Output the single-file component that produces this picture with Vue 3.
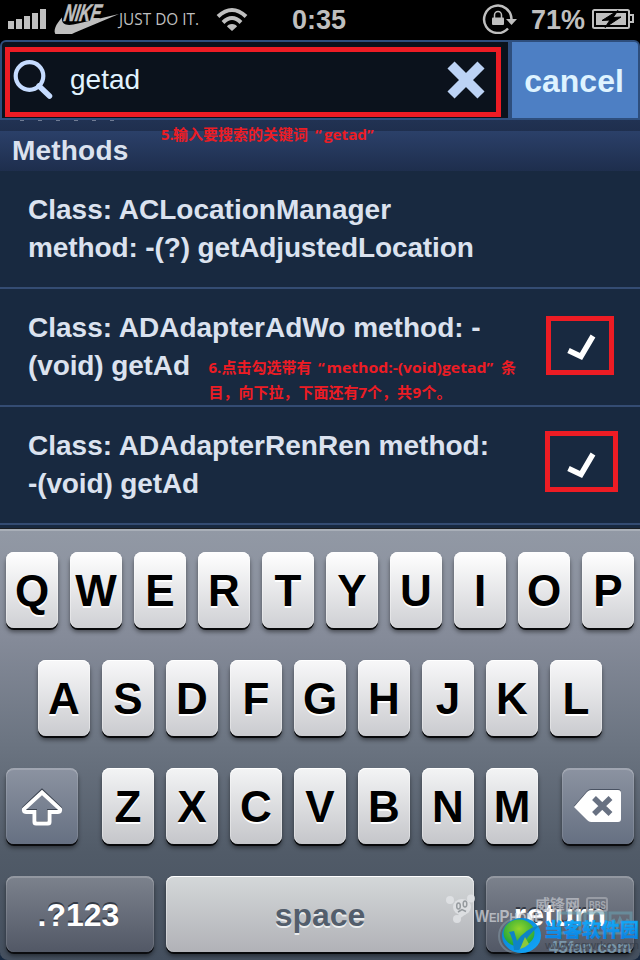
<template>
  <div class="phone">
    <header class="status">
      <svg class="carrier" width="260" height="40" viewBox="0 0 260 40">
        <g fill="#bfbfbf">
          <rect x="8" y="21" width="6" height="8" />
          <rect x="16" y="19" width="6" height="10" />
          <rect x="24" y="16" width="6" height="13" />
          <rect x="32" y="13" width="6" height="16" />
          <rect x="40" y="9" width="6" height="20" />
          <path d="M62 17.500 C56 24 52.500 31 56 35 C60 39 68 36 75 32.500 L119 14 L78 23.500 C69 26 61 26 62 17.500Z" />
        </g>
        <text class="nike" transform="translate(63 21) skewX(-10)" x="0" y="0" textLength="37" lengthAdjust="spacingAndGlyphs">NIKE</text>
        <text class="slogan" x="119" y="25" textLength="80" lengthAdjust="spacingAndGlyphs">JUST DO IT.</text>
        <g fill="none" stroke="#bfbfbf" stroke-width="4">
          <path d="M218 16.500 Q232 3.500 246 16.500" />
          <path d="M223 22.500 Q232 13.500 241 22.500" />
        </g>
        <path d="M227 26.500 Q228 24 232 24 Q236 24 237 26.500 L232 31Z" fill="#bfbfbf" />
      </svg>
      <span class="time">0:35</span>
      <svg class="lock" width="36" height="36" viewBox="0 0 36 36">
        <path d="M26 27.500 A13.700 13.700 0 1 1 29.500 18.500" fill="none" stroke="#bfbfbf" stroke-width="2.500" />
        <path d="M24 18 H35 L29.500 24Z" fill="#bfbfbf" />
        <rect x="10" y="16.500" width="12" height="7.500" rx="1" fill="#bfbfbf" />
        <path d="M12.500 17 V14 A3.500 3.500 0 0 1 19.500 14 V17" fill="none" stroke="#bfbfbf" stroke-width="1.500" />
      </svg>
      <span class="percent">71%</span>
      <svg class="battery" width="42" height="20" viewBox="0 0 42 20">
        <rect x="1" y="1" width="36" height="18" rx="1.500" fill="none" stroke="#bfbfbf" stroke-width="2" />
        <rect x="4" y="4" width="30" height="12" fill="#bfbfbf" />
        <path d="M38 6 H41 V13 H38" fill="none" stroke="#bfbfbf" stroke-width="2" />
        <path d="M26 1.500 L10 11.500 L18 11 L13 18.500 L29 8 L21 8.500Z" fill="#000" stroke="#000" />
        <path d="M24 3.500 L13.500 10.500 L20 10 L15.500 16 L26 9 L19.500 9.500Z" fill="#000" stroke="none" />
      </svg>
    </header>

    <div class="search">
      <div class="field">
        <svg class="glass" width="42" height="42" viewBox="0 0 42 42">
          <circle cx="18.500" cy="17" r="13.800" fill="none" stroke="#c6dcff" stroke-width="4.200" />
          <path d="M28 27 L38.500 37" stroke="#c6dcff" stroke-width="5.500" stroke-linecap="round" />
        </svg>
        <span class="query">{{ query }}</span>
        <svg class="clear" width="38" height="38" viewBox="0 0 38 38" @click="query = ''">
          <path d="M4 4 L34 34 M34 4 L4 34" stroke="#bcd3f5" stroke-width="10" />
        </svg>
      </div>
      <button class="cancel">cancel</button>
      <div class="mark mark-search"></div>
    </div>

    <div class="peek"><i v-for="n in 6" :key="n"></i></div>
    <h2 class="section">Methods</h2>

    <ul class="list">
      <li v-for="m in methods" :key="m.id" class="item" @click="m.on = !m.on">
        <p>{{ m.first }}<br /><span>{{ m.second }}</span></p>
        <svg v-if="m.on" class="tick" width="30" height="28" viewBox="0 0 30 28">
          <path d="M1.500 17.500 L14 23.500 L26 3" fill="none" stroke="#fff" stroke-width="5.500" />
        </svg>
        <div v-if="m.mark" :class="['mark', m.mark]"></div>
      </li>
    </ul>

    <svg class="notes" width="640" height="300" viewBox="0 110 640 300">
      <text x="161" y="140">5.</text>
      <text x="173" y="140" textLength="135">输入要搜索的关键词</text>
      <text x="315" y="140">“</text>
      <text x="324" y="140" textLength="43" lengthAdjust="spacingAndGlyphs">getad</text>
      <text x="367" y="140">”</text>

      <text x="208.500" y="373">6.</text>
      <text x="221.500" y="373" textLength="90">点击勾选带有</text>
      <text x="318" y="373">“</text>
      <text x="326.500" y="373" textLength="160" lengthAdjust="spacingAndGlyphs">method:-(void)getad</text>
      <text x="486.500" y="373">”</text>
      <text x="501" y="373">条</text>
      <text x="208.500" y="398" textLength="150">目，向下拉，下面还有</text>
      <text x="358.500" y="398">7</text>
      <text x="367" y="398" textLength="45">个，共</text>
      <text x="412.500" y="398">9</text>
      <text x="421.500" y="398" textLength="30">个。</text>
    </svg>

    <div class="keyboard">
      <div v-for="(row, i) in rows" :key="row" class="row">
        <button v-if="i === 2" class="key dark shift">
          <svg width="44" height="40" viewBox="0 0 44 40">
            <path class="shade" d="M22 4 L4 21 Q3 24 6 24 H15 V34 Q15 36 17 36 H27 Q29 36 29 34 V24 H38 Q41 24 40 21Z" />
            <path class="line" d="M22 5.500 L4 22 Q3 25 6 25 H14.500 V35 Q14.500 36.500 16 36.500 H28 Q29.500 36.500 29.500 35 V25 H38 Q41 25 40 22Z" />
          </svg>
        </button>
        <button v-for="k in row" :key="k" :class="['key', 'row-' + i]">{{ k }}</button>
        <button v-if="i === 2" class="key dark delete">
          <svg width="50" height="36" viewBox="0 0 50 36">
            <path d="M1 17 L14 2 Q16 0 18 0 H45 Q48 0 48 3 V29 Q48 32 45 32 H18 Q16 32 14 31Z" fill="#495262" />
            <path d="M1 18 L14 3 Q16 1 18 1 H45 Q48 1 48 4 V30 Q48 33 45 33 H18 Q16 33 14 31Z" fill="#fff" />
            <path d="M21 9 L37.500 25 M37.500 9 L21 25" stroke="#687182" stroke-width="5.500" />
          </svg>
        </button>
      </div>
      <div class="row">
        <button class="key deep numbers">.?123</button>
        <button class="key space">space</button>
        <button class="key deep return">return</button>
      </div>
    </div>

    <svg class="watermark" width="200" height="80" viewBox="440 880 200 80">
      <defs>
        <linearGradient id="ring" x1="0" y1="0" x2="1" y2="1">
          <stop offset="0" stop-color="#087fd0" />
          <stop offset="1" stop-color="#13a8fa" />
        </linearGradient>
        <radialGradient id="leaf" cx=".5" cy=".35" r=".6">
          <stop offset="0" stop-color="#93d42b" />
          <stop offset="1" stop-color="#24a83a" />
        </radialGradient>
        <linearGradient id="brand" x1="0" y1="0" x2="0" y2="1">
          <stop offset="0" stop-color="#17b9ff" />
          <stop offset="1" stop-color="#0878df" />
        </linearGradient>
      </defs>
      <g fill="#e3e5e8" opacity=".8">
        <circle cx="450" cy="900" r="4" />
        <circle cx="471" cy="898.500" r="4" />
        <ellipse cx="462" cy="907" rx="9" ry="8" />
        <circle cx="457" cy="919" r="4" />
        <path d="M460 912 L455 922 L466 914Z" />
      </g>
      <g fill="none" stroke="#969b9f" stroke-width="1.500">
        <ellipse cx="458.500" cy="906" rx="1.800" ry="3" />
        <ellipse cx="465" cy="904" rx="1.800" ry="3" />
        <path d="M458 912 L462 909.500 L466 911.500" />
      </g>
      <text class="wei" x="475" y="922" textLength="67" lengthAdjust="spacingAndGlyphs">W<tspan class="small">EI</tspan>P<tspan class="small">HONE</tspan></text>
      <text class="feng" x="535" y="910" textLength="45">威锋网</text>
      <rect x="587" y="898" width="20" height="13" rx="2" fill="none" stroke="#a9adb4" stroke-width="2" opacity=".7" />
      <text class="bbs" x="589" y="909" textLength="17" lengthAdjust="spacingAndGlyphs">BBS</text>
      <g fill="none" stroke="#6a9fb0" stroke-width="3" opacity=".6">
        <rect x="559" y="913" width="21" height="20" />
        <rect x="585" y="913" width="21" height="20" />
        <rect x="610" y="913" width="21" height="20" />
        <path d="M613 919 L617 927 L620 919 L624 927 L628 919" />
      </g>
      <circle cx="516" cy="936" r="17" fill="none" stroke="#94acb9" stroke-width="2" opacity=".4" />
      <ellipse cx="521.500" cy="935.500" rx="19.500" ry="17.500" fill="url(#ring)" />
      <ellipse cx="519" cy="933" rx="15.500" ry="13.500" fill="url(#leaf)" />
      <path d="M509 932 L514 931 L517 941 Q525 929 540 925 Q527 936 519 950 L514 950 Q513 938 509 932Z" fill="#0e83c8" />
      <path d="M525 937 L529 944 Q525 948 520 949Z" fill="#8cc93a" />
      <text class="fan" x="549" y="953" textLength="83" lengthAdjust="spacingAndGlyphs">45fan.com</text>
      <text class="url" x="545" y="949" textLength="94" lengthAdjust="spacingAndGlyphs">www.gqwrko.com</text>
      <text class="brand" x="544" y="937" textLength="95">当客软件园</text>
    </svg>
  </div>
</template>

<script setup>
import { ref } from 'vue'

const query = ref('getad')
const methods = ref([
  { id: 1, first: 'Class: ACLocationManager', second: 'method: -(?) getAdjustedLocation', on: false },
  { id: 2, first: 'Class: ADAdapterAdWo method: -', second: '(void) getAd', on: true, mark: 'mark-a' },
  { id: 3, first: 'Class: ADAdapterRenRen method:', second: '-(void) getAd', on: true, mark: 'mark-b' },
])
const rows = ['QWERTYUIOP', 'ASDFGHJKL', 'ZXCVBNM']
</script>

<style>
body { margin: 0; background: #000; }
</style>

<style scoped>
* { box-sizing: border-box; }
.phone {
  position: relative; width: 640px; height: 960px; overflow: hidden;
  background: #182940; font-family: "Liberation Sans", Arial, sans-serif;
}
button { border: 0; padding: 0; margin: 0; font-family: inherit; }

.status { display: flex; height: 40px; background: #000; color: #bfbfbf; font-weight: 700; line-height: 40px; }
.carrier { flex: none; }
.nike { font: italic 700 24px "Liberation Sans", sans-serif; fill: #bfbfbf; stroke: #bfbfbf; stroke-width: .6; }
.slogan { font: 16px "Open Sans", sans-serif; fill: #bfbfbf; }
.time { width: 222px; padding-left: 32px; font-size: 27px; }
.lock { flex: none; margin-top: 1px; }
.percent { width: 74px; padding-left: 13px; font-size: 27px; white-space: nowrap; }
.battery { flex: none; margin-top: 9px; }

.search {
  position: relative; display: flex; height: 80px; gap: 4px;
  padding: 2px; background: #2e4e7d; border-radius: 6px 6px 0 0; box-shadow: 0 -6px 0 #000;
}
.field { display: flex; align-items: center; width: 506px; background: #0b121c; border-radius: 4px 0 0 0; }
.glass { margin-left: 9px; }
.query { margin-left: 17px; flex: 1; color: #e0f3ff; font-size: 28px; line-height: 32px; }
.clear { margin-right: 23px; }
.cancel {
  width: 126px; padding: 2px 2px 0 0; background: #4d7fc4; color: #def3ff;
  font-size: 32px; font-weight: 700; border-radius: 0 4px 0 0;
}

.mark { position: absolute; border: 5px solid #ed1c24; pointer-events: none; }
.mark-search { left: 5px; top: 7px; width: 496px; height: 70px; }
.mark-a { left: 546px; top: 27px; width: 68px; height: 59px; }
.mark-b { left: 545px; top: 24px; width: 73px; height: 61px; }

.peek { display: flex; gap: 14px; height: 11px; padding-left: 20px; background: linear-gradient(#213253, #1f2f4e); }
.peek i { width: 4px; height: 1px; background: #707c94; }
.section {
  height: 40px; margin: 0; padding-left: 12px; line-height: 40px; font-size: 28px; letter-spacing: .2px;
  color: #dbe2ef; background: linear-gradient(#2b4069, #1e2e4d);
}

.list { list-style: none; margin: 0; padding: 0; color: #dbe2ef; }
.item {
  position: relative; display: flex; justify-content: space-between;
  height: 118px; padding: 20px 43px 0 28px; border-bottom: 2px solid #344c73;
}
.item p { margin: 0; font-size: 28px; font-weight: 700; line-height: 38px; white-space: nowrap; }
.item p span { letter-spacing: -.12px; }
.tick { margin-top: 24px; }

.notes { position: absolute; left: 0; top: 110px; pointer-events: none; }
.notes text { font: 700 15px "Open Sans", "Noto Sans CJK SC", sans-serif; fill: #ed1c24; }

.keyboard {
  position: absolute; left: 0; top: 528px; width: 640px; height: 432px; padding: 23px 6px 0;
  display: flex; flex-direction: column; gap: 32px;
  border-top: 1px solid #1b1e22; box-shadow: inset 0 2px 0 #a9afb8;
  background: linear-gradient(#9299a5, #858b99 25%, #6b7481 50%, #515b68 75%, #444f5e);
  border-radius: 0 0 8px 8px;
}
.row { display: flex; justify-content: center; gap: 12px; }
.key {
  width: 52px; height: 76px; padding-top: 2px; border-radius: 8px; color: #000; font-size: 44px; font-weight: 700;
  line-height: 74px; text-shadow: 0 2px 0 #fff; background: linear-gradient(#fff, #cfd0d4);
  box-shadow: inset 0 1px 0 #fff, inset 1px 0 0 rgba(255,255,255,.35), inset -1px 0 0 rgba(255,255,255,.35), 0 2px 0 #08090b, 0 4px 4px rgba(0,0,0,.45);
}
.row-1 { background: linear-gradient(#f8f8f9, #cacbcf); }
.row-2 { background: linear-gradient(#f3f4f5, #c5c6ca); }
.dark, .deep {
  width: 72px; background: linear-gradient(#8c93a1, #667082); color: #fff;
  box-shadow: inset 0 2px 0 rgba(255,255,255,.18), inset 1px 0 0 rgba(255,255,255,.12), inset -1px 0 0 rgba(255,255,255,.12), 0 2px 0 #0b0c0f, 0 4px 4px rgba(0,0,0,.45);
}
.dark { display: flex; align-items: center; justify-content: center; }
.shift { margin-right: 12px; }
.delete { margin-left: 12px; }
.shade { fill: none; stroke: #3a424f; stroke-width: 4; }
.line { fill: none; stroke: #fff; stroke-width: 4; }
.deep { width: 148px; font-size: 32px; text-shadow: 0 -2px 0 #343a45; background: linear-gradient(#7c828d, #525866); }
.numbers { padding-right: 3px; }
.space { width: 308px; font-size: 32px; color: #535e6c; text-shadow: 0 2px 0 #eceeef; background: linear-gradient(#d4d8d9, #b1b2b7); }

.watermark { position: absolute; left: 440px; top: 880px; pointer-events: none; }
.wei { font: 700 17px "Liberation Sans", sans-serif; fill: #d0d3d8; opacity: .75; }
.small { font-size: 13px; }
.feng { font: 700 15px "Noto Sans CJK SC", sans-serif; fill: #bbbec5; opacity: .8; }
.bbs { font: 700 11px "Liberation Sans", sans-serif; fill: #b3b7be; opacity: .8; }
.brand { font: 900 19px "Noto Sans CJK SC", sans-serif; fill: url(#brand); stroke: #128fe5; stroke-width: .3; }
.fan { font: 700 16px "Liberation Sans", sans-serif; fill: #83a6bb; opacity: .8; }
.url { font: 11px "Liberation Sans", sans-serif; fill: #343c48; opacity: .7; }
</style>
